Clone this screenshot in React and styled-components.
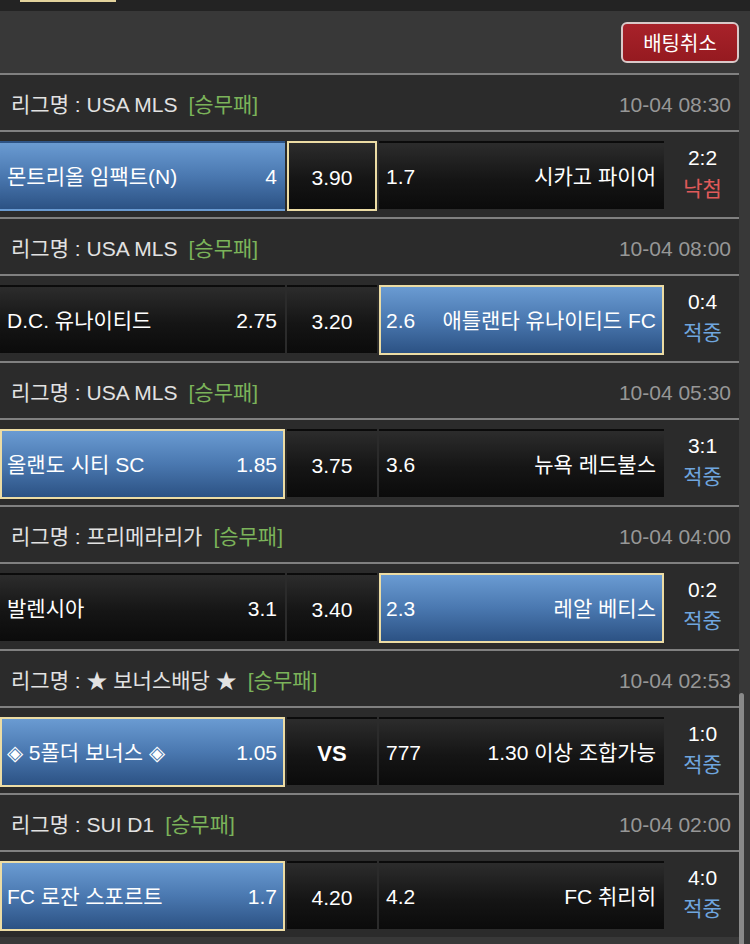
import React from "react";
import styled, { createGlobalStyle, css } from "styled-components";

const GlobalStyle = createGlobalStyle`
  html, body {
    margin: 0;
    padding: 0;
    background: #383838;
  }
  body {
    font-family: "Liberation Sans", "Noto Sans CJK KR", sans-serif;
    color: #ffffff;
  }
`;

const matches = [
  {
    league: "USA MLS",
    time: "10-04 08:30",
    home: { name: "몬트리올 임팩트(N)", odds: "4" },
    draw: "3.90",
    away: { name: "시카고 파이어", odds: "1.7" },
    win: "home",
    pick: "draw",
    score: "2:2",
    result: "낙첨",
  },
  {
    league: "USA MLS",
    time: "10-04 08:00",
    home: { name: "D.C. 유나이티드", odds: "2.75" },
    draw: "3.20",
    away: { name: "애틀랜타 유나이티드 FC", odds: "2.6" },
    win: "away",
    pick: "away",
    score: "0:4",
    result: "적중",
  },
  {
    league: "USA MLS",
    time: "10-04 05:30",
    home: { name: "올랜도 시티 SC", odds: "1.85" },
    draw: "3.75",
    away: { name: "뉴욕 레드불스", odds: "3.6" },
    win: "home",
    pick: "home",
    score: "3:1",
    result: "적중",
  },
  {
    league: "프리메라리가",
    time: "10-04 04:00",
    home: { name: "발렌시아", odds: "3.1" },
    draw: "3.40",
    away: { name: "레알 베티스", odds: "2.3" },
    win: "away",
    pick: "away",
    score: "0:2",
    result: "적중",
  },
  {
    league: "★ 보너스배당 ★",
    time: "10-04 02:53",
    home: { name: "◈ 5폴더 보너스 ◈", odds: "1.05" },
    draw: "VS",
    away: { name: "1.30 이상 조합가능", odds: "777" },
    win: "home",
    pick: "home",
    score: "1:0",
    result: "적중",
  },
  {
    league: "SUI D1",
    time: "10-04 02:00",
    home: { name: "FC 로잔 스포르트", odds: "1.7" },
    draw: "4.20",
    away: { name: "FC 취리히", odds: "4.2" },
    win: "home",
    pick: "home",
    score: "4:0",
    result: "적중",
  },
];

const App = () => {
  return (
    <Page>
      <GlobalStyle />
      <TopStrip>
        <TabEdge />
      </TopStrip>
      <Toolbar>
        <CancelButton>배팅취소</CancelButton>
      </Toolbar>
      <List>
        {matches.map((m, i) => (
          <Block key={i}>
            <LeagueRow>
              <LeagueName>
                리그명 : {m.league}
                <BetType>[승무패]</BetType>
              </LeagueName>
              <Time>{m.time}</Time>
            </LeagueRow>
            <MatchRow>
              <Cell $win={m.win === "home"} $pick={m.pick === "home"}>
                <span>{m.home.name}</span>
                <span>{m.home.odds}</span>
              </Cell>
              <DrawCell
                $pick={m.pick === "draw"}
                $bold={m.draw === "VS"}
              >
                {m.draw}
              </DrawCell>
              <Cell $win={m.win === "away"} $pick={m.pick === "away"}>
                <span>{m.away.odds}</span>
                <span>{m.away.name}</span>
              </Cell>
              <Result>
                <Score>{m.score}</Score>
                <Outcome $lost={m.result === "낙첨"}>{m.result}</Outcome>
              </Result>
            </MatchRow>
          </Block>
        ))}
      </List>
      <ScrollThumb />
    </Page>
  );
};

export default App;

const Page = styled.div`
  width: 750px;
  min-height: 944px;
  background: #383838;
  overflow: hidden;
`;

const TopStrip = styled.div`
  height: 11px;
  background: #232323;
  padding-left: 20px;
`;

const TabEdge = styled.div`
  width: 96px;
  height: 2px;
  background: #e3d39c;
`;

const Toolbar = styled.div`
  height: 62px;
  box-sizing: border-box;
  padding: 11px 11px 0 0;
  display: flex;
  justify-content: flex-end;
  align-items: flex-start;
`;

const CancelButton = styled.button`
  width: 118px;
  height: 41px;
  box-sizing: border-box;
  background: linear-gradient(to bottom, #a8222a, #951a20);
  border: 2px solid #d9c9c9;
  border-radius: 6px;
  color: #fff;
  font-family: "Liberation Sans", "Noto Sans CJK KR", sans-serif;
  font-size: 20px;
  padding: 0;
`;

const List = styled.div`
  width: 739px;
`;

const Block = styled.div`
  border-top: 2px solid #808080;
`;

const LeagueRow = styled.div`
  height: 57px;
  box-sizing: border-box;
  padding: 5px 8px 0 11px;
  background: #2b2b2b;
  display: flex;
  align-items: center;
  justify-content: space-between;
  border-bottom: 2px solid #808080;
  font-size: 21px;
  line-height: 26px;
`;

const LeagueName = styled.div`
  color: #e2e2e2;
  white-space: pre;
`;

const BetType = styled.span`
  color: #7bb35a;
  margin-left: 11px;
`;

const Time = styled.div`
  color: #979797;
  font-size: 21px;
`;

const MatchRow = styled.div`
  height: 85px;
  box-sizing: border-box;
  padding: 9px 0 6px;
  background: #2b2b2b;
  display: grid;
  grid-template-columns: 285px 90px 285px 1fr;
  column-gap: 2px;
`;

const cellBase = css`
  box-sizing: border-box;
  border: 2px solid ${(p) => (p.$pick ? "#ecdca4" : "transparent")};
  background: ${(p) =>
    p.$win
      ? "linear-gradient(to bottom, #6a9bd2 0%, #4a78b0 50%, #2c5284 100%)"
      : "linear-gradient(to bottom, #2c2c2c 0%, #151515 55%, #0b0b0b 100%)"};
  color: #fff;
  font-size: 21px;
  line-height: 26px;
  display: flex;
  align-items: center;
`;

const Cell = styled.div`
  ${cellBase}
  justify-content: space-between;
  padding: 1px 6px 0 5px;
  white-space: nowrap;
`;

const DrawCell = styled.div`
  ${cellBase}
  justify-content: center;
  padding-top: 3px;
  font-size: ${(p) => (p.$bold ? "22px" : "21px")};
  font-weight: ${(p) => (p.$bold ? 700 : 400)};
`;

const Result = styled.div`
  display: flex;
  flex-direction: column;
  align-items: center;
  justify-content: center;
  font-size: 21px;
  line-height: 31px;
  margin-top: -6px;
`;

const Score = styled.div`
  color: #fff;
`;

const Outcome = styled.div`
  color: ${(p) => (p.$lost ? "#e05a5a" : "#6fa5de")};
`;

const ScrollThumb = styled.div`
  position: fixed;
  right: 6px;
  top: 693px;
  width: 5px;
  height: 300px;
  border-radius: 3px;
  background: #8a8a8a;
`;
